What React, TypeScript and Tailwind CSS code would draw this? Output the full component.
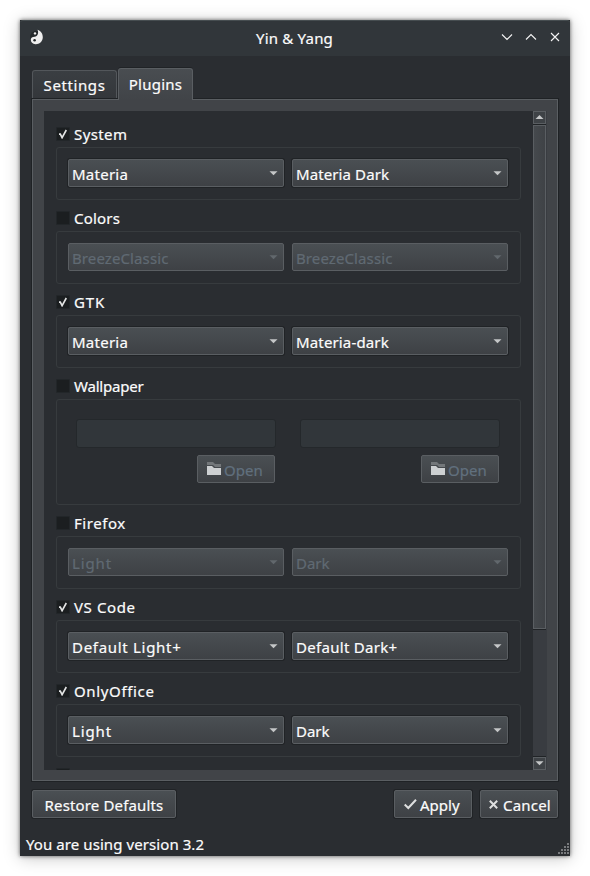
import React from "react";

const raised =
  "rounded-[2px] border border-[#5a5e62] bg-linear-to-b from-[#4a4f53] to-[#3e4145]";

// Letter spacing tuned per label so the text fills its native width.
const tracking: Record<string, string> = {
  System: "tracking-[0.4px]",
  Colors: "tracking-[0.2px]",
  GTK: "tracking-[0.9px]",
  Wallpaper: "tracking-[-0.2px]",
  Firefox: "tracking-[0.55px]",
  "VS Code": "tracking-[0.6px]",
  OnlyOffice: "tracking-[0.65px]",
  Materia: "tracking-[0.25px]",
  "Materia Dark": "tracking-[0.1px]",
  "Materia-dark": "tracking-[0.15px]",
  BreezeClassic: "tracking-[0.1px]",
  Light: "tracking-[0.85px]",
  "Default Light+": "tracking-[0.7px]",
  "Default Dark+": "tracking-[0.3px]",
};

type Section = { name: string; on: boolean; light: string; dark: string };

const before: Section[] = [
  { name: "System", on: true, light: "Materia", dark: "Materia Dark" },
  { name: "Colors", on: false, light: "BreezeClassic", dark: "BreezeClassic" },
  { name: "GTK", on: true, light: "Materia", dark: "Materia-dark" },
];
const after: Section[] = [
  { name: "Firefox", on: false, light: "Light", dark: "Dark" },
  { name: "VS Code", on: true, light: "Default Light+", dark: "Default Dark+" },
  { name: "OnlyOffice", on: true, light: "Light", dark: "Dark" },
];

function Arrow({ up = false, color = "#c5c7c8" }: { up?: boolean; color?: string }) {
  return (
    <svg width="9" height="5" viewBox="0 0 9 5" className="block shrink-0">
      <path d={up ? "M4.5 0L8.5 4H.5z" : "M.5 .3H8.5L4.5 4.3z"} fill={color} />
    </svg>
  );
}

function Header({ name, on }: { name: string; on: boolean }) {
  return (
    <div className="flex h-[26px] shrink-0 items-center">
      <span className="flex size-[14px] items-center justify-center rounded-[1px] border border-[#222629] bg-[#1b1e20]">
        {on && (
          <svg width="10" height="10" viewBox="0 0 10 10" fill="none" stroke="#e4e5e5" strokeWidth="1.6">
            <path d="M1 5.1h1.3L4.1 8.7L8.3 1" />
          </svg>
        )}
      </span>
      <span className={`pl-1 leading-[26px] ${tracking[name] ?? ""}`}>{name}</span>
    </div>
  );
}

function Combo({ text, on }: { text: string; on: boolean }) {
  return (
    <div
      className={`${raised} flex h-[28px] w-[216px] items-center justify-between pl-[3px] pr-[5px] ${
        on ? "shadow-[0_0_0_1px_#202326]" : "text-[#606a73]"
      }`}
    >
      <span className={`pt-[2px] leading-6 ${tracking[text] ?? ""}`}>{text}</span>
      <Arrow color={on ? "#c5c7c8" : "#62686d"} />
    </div>
  );
}

function PluginRow({ name, on, light, dark }: Section) {
  return (
    <section className="mb-[5px] shrink-0">
      <Header name={name} on={on} />
      <div className="flex h-[53px] gap-2 rounded-[3px] border border-[#373b3e] pl-[11px] pt-[11px]">
        <Combo text={light} on={on} />
        <Combo text={dark} on={on} />
      </div>
    </section>
  );
}

function FilePicker() {
  return (
    <div className="flex w-[200px] flex-col items-end">
      <div className="h-[29px] w-[200px] rounded-[3px] border border-[#24282b] bg-[#31363a]" />
      <div className={`${raised} mr-px mt-[7px] flex h-[28px] w-[78px] items-center pl-[9px] text-[#61707e]`}>
        <svg width="14" height="14" viewBox="0 0 14 14" className="mr-[3px] shrink-0">
          <path d="M0 0h6l2 2h6v3H8L6 3H0z" fill="#73777a" />
          <path d="M0 4h5l2 2h7v7H0z" fill="#cdd0d2" />
        </svg>
        <span className="pt-[2px] leading-6">Open</span>
      </div>
    </div>
  );
}

function ScrollBar() {
  return (
    <div className="flex h-[659px] w-[14px] shrink-0 flex-col bg-[#393c41] pr-px">
      <div className="flex h-[13px] items-center justify-center border border-[#5a5e62] bg-[#3e4246]">
        <Arrow up />
      </div>
      <div className="h-px bg-[#202326]" />
      <div className="h-[504px] border border-[#5a5e62] bg-linear-to-r from-[#45494d] to-[#3f4246]" />
      <div className="h-px bg-[#202326]" />
      <div className="flex-1" />
      <div className="h-px bg-[#202326]" />
      <div className="flex h-[13px] items-center justify-center border border-[#5a5e62] bg-[#3e4246]">
        <Arrow />
      </div>
    </div>
  );
}

function TitleBar() {
  return (
    <header className="flex h-9 shrink-0 items-center rounded-t-[3px] border-t border-[#464d50] bg-[#31363a] pb-[3px] pl-[10px] pr-[9px]">
      <svg width="14" height="16" viewBox="0 0 14 16" className="shrink-0">
        <circle cx="6.5" cy="8" r="6.3" fill="#23272a" />
        <path d="M7.5 .8C11 2 13 4.8 12.8 8.6C12.6 13 9 15.5 5.5 15.3C2.5 15.1 .8 13.2 .8 10.8C.8 8.6 2.4 7.7 4.6 7.7C7.7 7.6 9 4 7.5 .8z" fill="#eeeeee" />
        <circle cx="5" cy="4.4" r="1.2" fill="#eee" />
        <circle cx="4.6" cy="11.3" r="1.3" fill="#24282b" />
      </svg>
      <h1 className="flex-1 pl-11 pt-[2px] text-center leading-6 tracking-[0.2px]">Yin &amp; Yang</h1>
      <svg width="60" height="12" viewBox="0 0 60 12" fill="none" stroke="#f4f4f4" strokeWidth="1.1" className="shrink-0">
        <path d="M1 3.5L6 8.5L11 3.5M25 8.5L30 3.5L35 8.5M50 2L58 10M58 2L50 10" />
      </svg>
    </header>
  );
}

const grip = [[9, 0], [6, 3], [9, 3], [3, 6], [6, 6], [9, 6], [0, 9], [3, 9], [6, 9], [9, 9]];

export default function App() {
  return (
    <div className="h-[876px] w-[590px] overflow-hidden bg-white p-5 font-['Noto_Sans',sans-serif] text-[15px] text-[#fcfcfc] [-webkit-text-stroke:0.2px]">
      <main className="flex h-[836px] w-[550px] flex-col bg-[#2a2d31] shadow-[0_0_4px_rgba(0,0,0,0.6),0_2px_16px_rgba(0,0,0,0.22)]">
        <TitleBar />
        <div className="flex h-[42px] shrink-0 items-end pl-3">
          <div className="flex h-[28px] w-[85px] items-center justify-center rounded-t-[3px] border border-b-0 border-[#53575b] bg-linear-to-b from-[#3a3e42] to-[#34373b] pt-[2px] tracking-[0.6px]">
            Settings
          </div>
          <div className="z-10 -mb-[2px] ml-px flex h-[32px] w-[75px] items-center justify-center rounded-t-[3px] border border-b-0 border-[#5a5e62] bg-linear-to-b from-[#494d51] to-[#414448] tracking-[0.25px] shadow-[0_-1px_0_#202326]">
            Plugins
          </div>
        </div>
        <div className="mx-[11px] flex h-[684px] shrink-0 border border-[#1f2225]">
          <div className="flex w-full border border-[#5a5e62] bg-[#414448] pl-[11px] pt-[11px]">
            <div className="flex h-[659px] w-[489px] flex-col overflow-hidden bg-[#2a2d31] pl-3 pr-3 pt-[10px]">
              {before.map((s) => (
                <PluginRow key={s.name} {...s} />
              ))}
              <section className="mb-[5px] shrink-0">
                <Header name="Wallpaper" on={false} />
                <div className="flex h-[106px] gap-6 rounded-[3px] border border-[#373b3e] pl-[19px] pt-[19px]">
                  <FilePicker />
                  <FilePicker />
                </div>
              </section>
              {after.map((s) => (
                <PluginRow key={s.name} {...s} />
              ))}
              <Header name="" on={false} />
            </div>
            <ScrollBar />
          </div>
        </div>
        <div className="flex h-[36px] shrink-0 items-end px-3">
          <button className={`${raised} h-[28px] w-[144px] leading-6 tracking-[0.15px] shadow-[0_0_0_1px_#202326]`}>
            <span className="block pt-[2px]">Restore Defaults</span>
          </button>
          <button className={`${raised} ml-auto flex h-[28px] w-[78px] items-center pl-[9px] shadow-[0_0_0_1px_#202326]`}>
            <svg width="13" height="12" viewBox="0 0 13 12" fill="none" stroke="#dedfdf" strokeWidth="2" className="mr-[3px] shrink-0">
              <path d="M.7 6.5L4.3 10L12 1.7" />
            </svg>
            <span className="pt-[2px] leading-6">Apply</span>
          </button>
          <button className={`${raised} ml-2 flex h-[28px] w-[78px] items-center pl-[8px] shadow-[0_0_0_1px_#202326]`}>
            <svg width="9" height="9" viewBox="0 0 9 9" fill="none" stroke="#dedfdf" strokeWidth="2" className="mr-[5px] shrink-0">
              <path d="M.8.8L8.2 8.2M8.2.8L.8 8.2" />
            </svg>
            <span className="pt-[2px] leading-6 tracking-[0.2px]">Cancel</span>
          </button>
        </div>
        <footer className="flex flex-1 items-end justify-between pl-[6px]">
          <span className="leading-6 tracking-[0.08px]">You are using version 3.2</span>
          <svg width="12" height="12" viewBox="0 0 12 12" className="mb-px" shapeRendering="crispEdges">
            {grip.map(([x, y]) => (
              <rect key={`${x}-${y}`} x={x} y={y} width="2" height="2" fill="#77797c" />
            ))}
          </svg>
        </footer>
      </main>
    </div>
  );
}
